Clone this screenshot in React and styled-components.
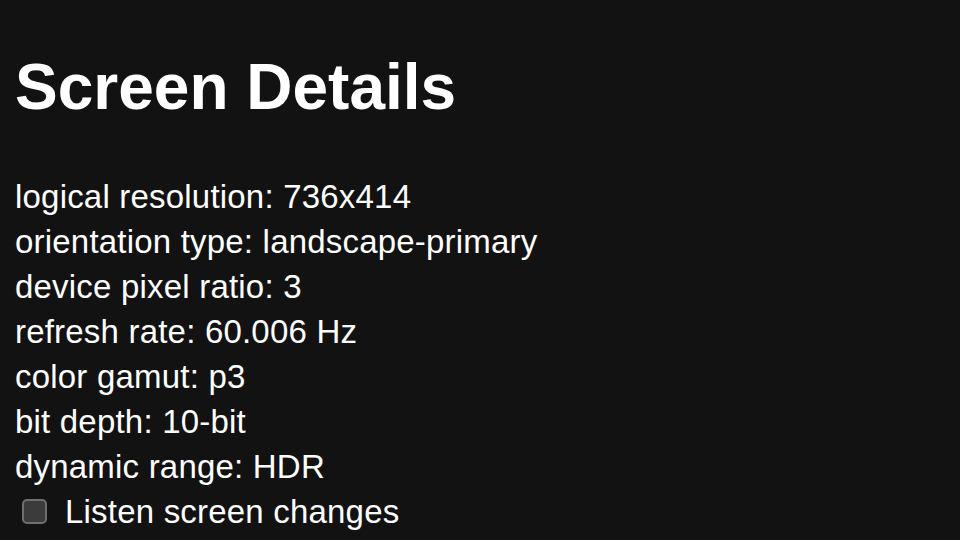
import React from "react";
import styled, { createGlobalStyle } from "styled-components";

const details = [
  ["logical resolution", "736x414"],
  ["orientation type", "landscape-primary"],
  ["device pixel ratio", "3"],
  ["refresh rate", "60.006 Hz"],
  ["color gamut", "p3"],
  ["bit depth", "10-bit"],
  ["dynamic range", "HDR"],
];

function App() {
  return (
    <>
      <GlobalStyle />
      <Page>
        <Title>Screen Details</Title>
        <List>
          {details.map(([label, value]) => (
            <Row key={label}>
              {label}: {value}
            </Row>
          ))}
        </List>
        <Toggle>
          <Box type="checkbox" />
          <span>Listen screen changes</span>
        </Toggle>
      </Page>
    </>
  );
}

export default App;

const GlobalStyle = createGlobalStyle`
  html, body {
    margin: 0;
    background: #121212;
    color: #ffffff;
    font-family: "Liberation Sans", Arial, sans-serif;
  }
`;

const Page = styled.div`
  width: 960px;
  height: 540px;
  box-sizing: border-box;
  padding: 0 15px;
  overflow: hidden;
`;

const Title = styled.h1`
  margin: 0;
  padding-top: 50px;
  font-size: 64px;
  font-weight: 700;
  line-height: 74px;
`;

const List = styled.div`
  margin-top: 50px;
  display: flex;
  flex-direction: column;
`;

const Row = styled.div`
  font-size: 33px;
  letter-spacing: 0.2px;
  line-height: 45px;
`;

const Toggle = styled.label`
  display: flex;
  align-items: center;
  gap: 18px;
  padding-left: 7px;
  font-size: 33px;
  letter-spacing: 0.2px;
  line-height: 45px;
`;

const Box = styled.input`
  appearance: none;
  margin: 0;
  width: 25px;
  height: 25px;
  box-sizing: border-box;
  border: 2px solid #6f6f6f;
  border-radius: 5px;
  background: #3b3b3b;
`;
